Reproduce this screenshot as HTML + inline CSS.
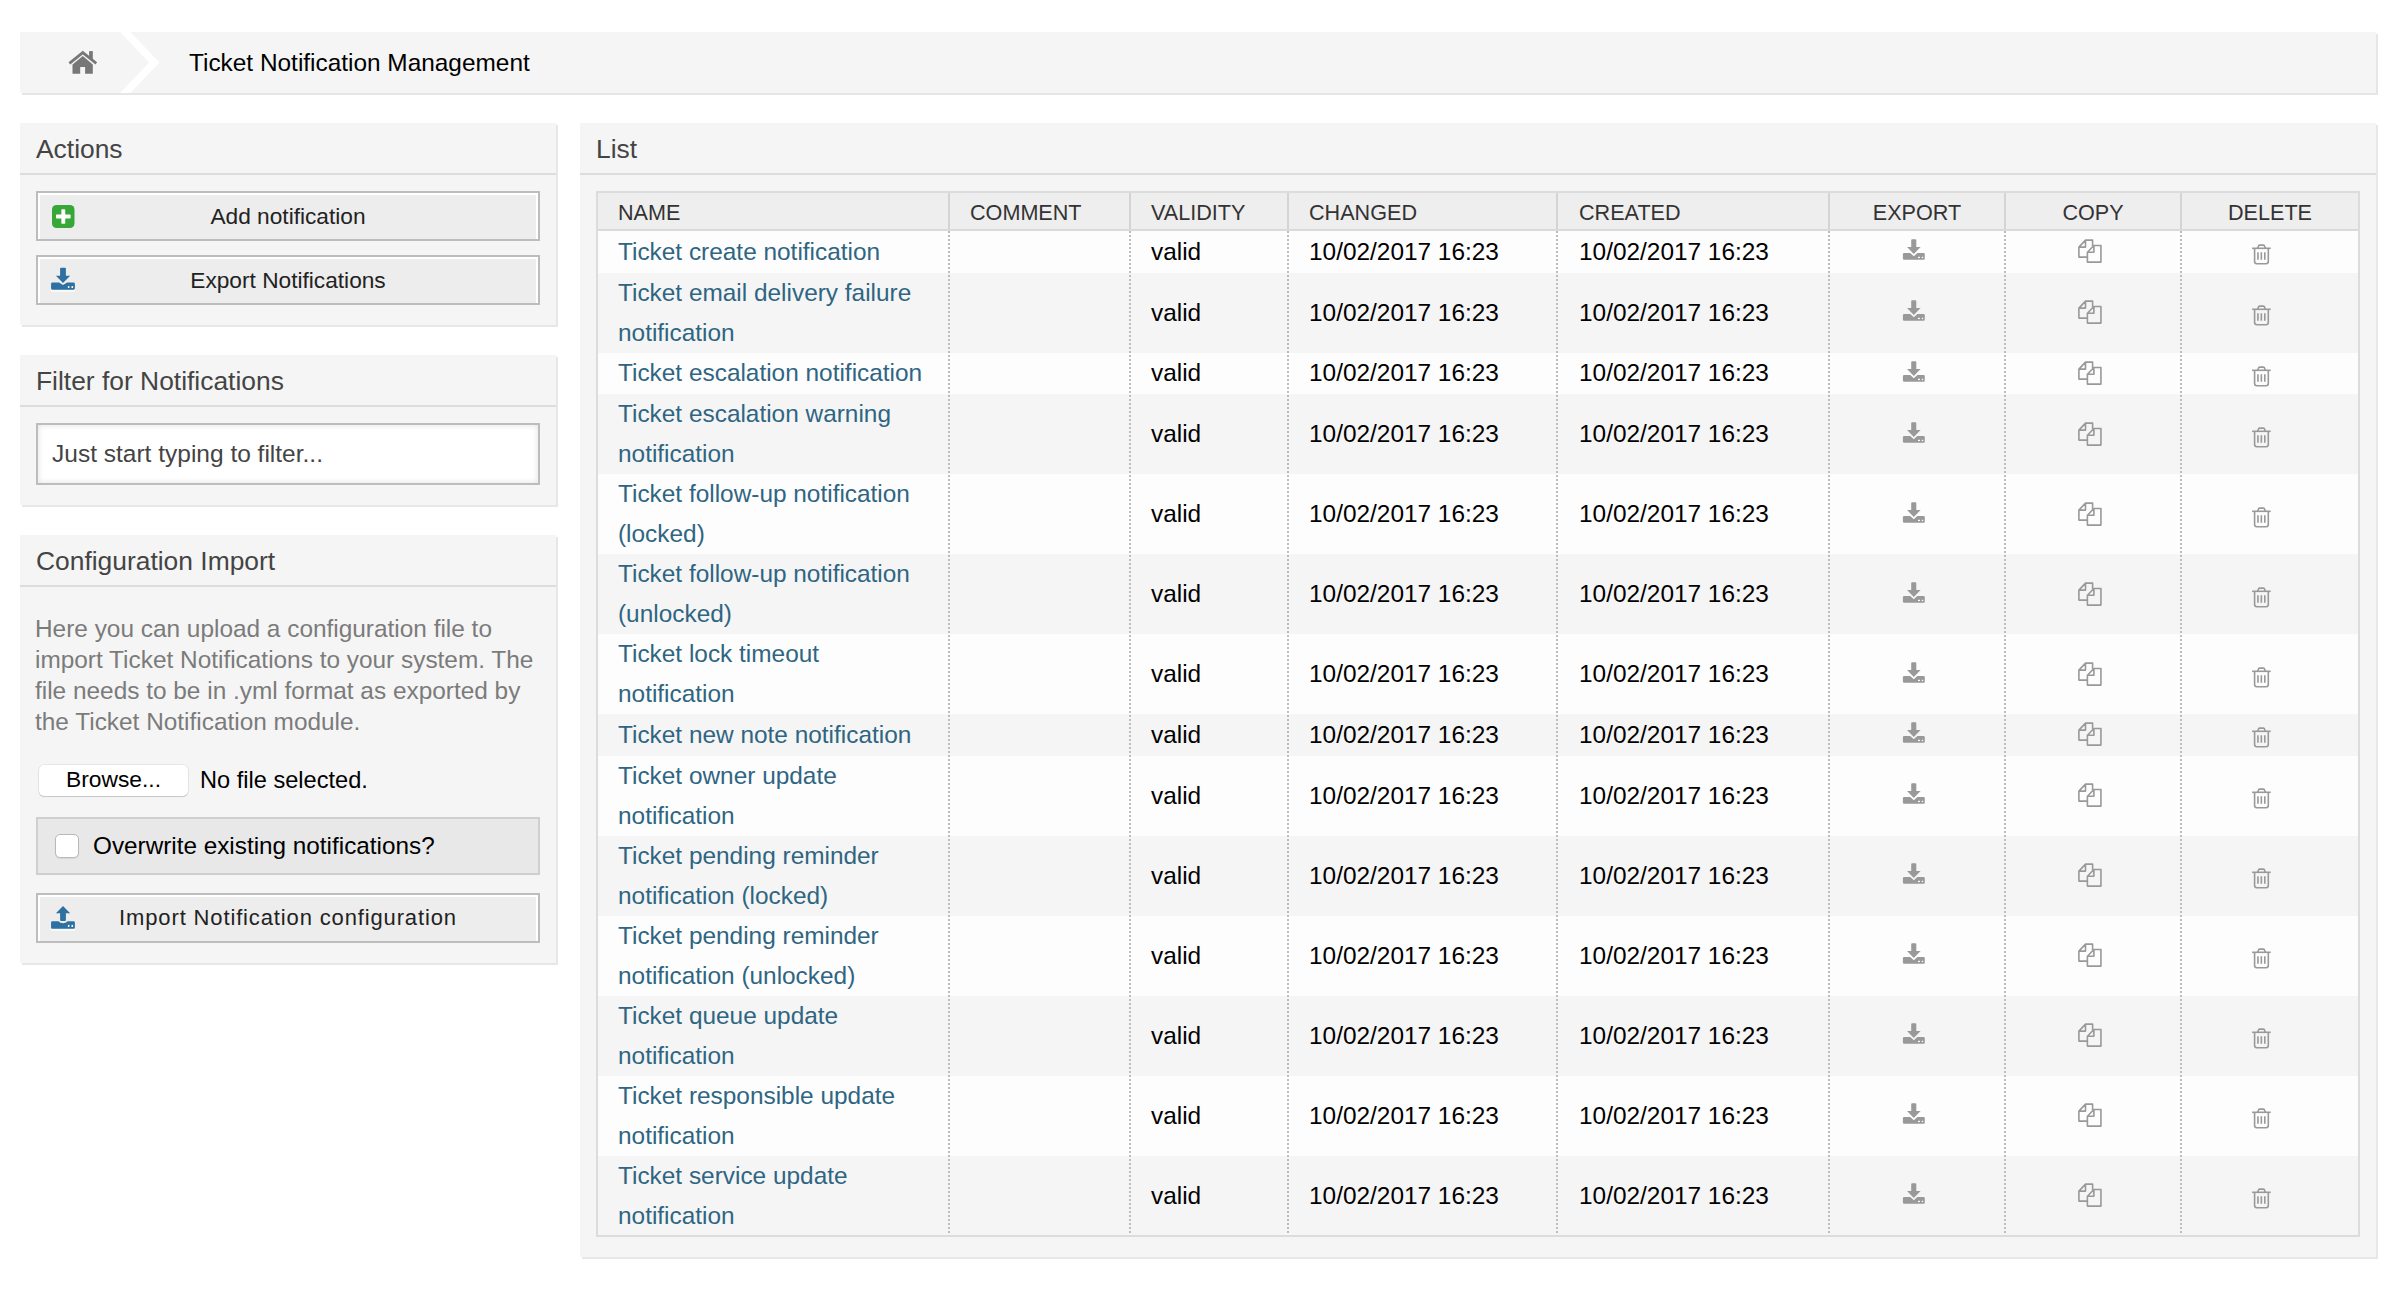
<!DOCTYPE html>
<html><head><meta charset="utf-8">
<style>
*{box-sizing:border-box;margin:0;padding:0}
html,body{width:2400px;height:1300px;overflow:hidden;background:#fff}
body{font-family:"Liberation Sans",sans-serif;color:#000;position:relative}
.abs{position:absolute}
.crumb{left:20px;top:32px;width:2356px;height:61px;background:#f5f5f5;box-shadow:2px 2px 0 #e6e6e6}
.crumb .title{position:absolute;left:169px;top:0;line-height:61px;font-size:24.4px;white-space:nowrap;color:#000}
.panel{background:#f5f5f5;box-shadow:2px 2px 0 #e7e7e7}
.panel .hd{height:52px;border-bottom:2px solid #dcdcdc;position:relative}
.panel .hd h2{position:absolute;left:16px;top:0;font-weight:normal;font-size:26.4px;color:#444;line-height:52px;white-space:nowrap}
.btn{position:absolute;left:16px;width:504px;height:50px;border:2px solid #bdbdbd;background:#ededed;box-shadow:inset 2px 2px 0 #fff,inset -2px 0 0 #fff}
.btn span{position:absolute;left:0;right:0;top:0;text-align:center;line-height:46px;font-size:22.7px;color:#222;white-space:nowrap}
.btn svg{position:absolute}
.desc{position:absolute;left:15px;top:78px;width:510px;font-size:24.4px;line-height:31px;color:#7b7b7b}
/* table */
.tbl{left:596px;top:191px;width:1764px;height:1046px;border:2px solid #dcdcdc;background:#f5f5f5;overflow:hidden}
.th{position:absolute;left:0;top:0;width:1760px;height:38px;background:#eee;border-bottom:2px solid #dadada}
.th div{position:absolute;top:0;height:36px;line-height:40px;font-size:21.6px;color:#333;white-space:nowrap}
.th .sep{width:2px;background:#d4d4d4;height:36px}
.row{position:absolute;left:0;width:1760px}
.odd{background:#fdfdfd}
.even{background:#f5f5f5}
.c{position:absolute;top:0;bottom:0;display:flex;align-items:center;font-size:24.4px;line-height:40px;white-space:nowrap}
.c.n{left:20px;color:#2f6582}
.c.v{left:553px}
.c.d1{left:711px}
.c.d2{left:981px}
.dsep{position:absolute;top:38px;bottom:0;width:2px;background:repeating-linear-gradient(to bottom,#bdbdbd 0,#bdbdbd 2px,transparent 2px,transparent 4px)}
.row svg{position:absolute}
</style></head><body>
<svg width="0" height="0" style="position:absolute">
<defs>
<symbol id="exp" viewBox="0 0 40 36">
 <path d="M16.2 8.3 Q16.2 7.3 17.2 7.3 H20.3 Q21.3 7.3 21.3 8.3 V15.1 H25.6 L18.8 21.9 L12.05 15.1 H16.2 Z" fill="#999"/>
 <path d="M7.9 22.3 Q7.9 21.05 9.2 21.05 H15.2 L18.8 24.3 L22.4 21.05 H28.5 Q29.8 21.05 29.8 22.3 V26.4 Q29.8 27.7 28.5 27.7 H9.2 Q7.9 27.7 7.9 26.4 Z" fill="#999"/>
 <rect x="23" y="24.8" width="1.9" height="1.3" fill="#fff"/><rect x="26.8" y="24.8" width="1.4" height="1.3" fill="#fff"/>
</symbol>
<symbol id="cpy" viewBox="0 0 40 36">
 <g fill="none" stroke="#999" stroke-width="1.6" stroke-linejoin="round">
 <path d="M17.4 20.2 L23.9 13.43 H30.94 V30.1 H17.4 Z M23.9 13.43 V20.2 H17.4"/>
 <path d="M17.4 25.1 H8.9 V15.1 L15.5 8.17 H22.6 V13.9 M15.5 8.17 V15.1 H8.9"/>
 </g>
</symbol>
<symbol id="trs" viewBox="0 0 35 35">
 <g fill="none" stroke="#999" stroke-width="1.6">
 <path d="M7.1 13.3 H25.7"/>
 <path d="M12.6 13.3 L13.8 10.5 Q14.1 10.1 14.7 10.1 H18.3 Q18.9 10.1 19.2 10.5 L20.4 13.3"/>
 <path d="M9.6 13.3 V26.6 Q9.6 28.8 11.8 28.8 H21.1 Q23.3 28.8 23.3 26.6 V13.3"/>
 <path d="M12.95 17.2 V24.8 M16.35 17.2 V24.8 M19.8 17.2 V24.8"/>
 </g>
</symbol>
</defs>
</svg>
<!-- breadcrumb -->
<div class="abs crumb">
  <svg class="abs" style="left:42px;top:10px" width="40" height="40" viewBox="0 0 40 40">
    <polyline points="7.4,21.4 20.8,10.6 34.3,21.4" fill="none" stroke="#777" stroke-width="2.7"/>
    <rect x="27.1" y="9.1" width="3.7" height="8" fill="#777"/>
    <path d="M10.5 22.4 L20.8 13.9 L30.8 22.4 V31.7 H23.1 V25.1 H18.2 V31.7 H10.5 Z" fill="#777"/>
  </svg>
  <svg class="abs" style="left:98px;top:0" width="44" height="61" viewBox="0 0 44 61">
    <polygon points="2,0 12.5,0 41.5,30.5 12.5,61 2,61 31,30.5" fill="#fff"/>
  </svg>
  <div class="title">Ticket Notification Management</div>
</div>

<!-- Actions -->
<div class="abs panel" style="left:20px;top:123px;width:536px;height:202px">
  <div class="hd"><h2>Actions</h2></div>
  <div class="btn" style="top:68px">
    <svg style="left:14px;top:12px" width="24" height="24" viewBox="0 0 24 24"><rect x="0" y="0" width="22.5" height="23" rx="4.5" fill="#37a737"/><rect x="9.35" y="4.3" width="3.9" height="14.4" rx="0.6" fill="#fff"/><rect x="4" y="9.55" width="14.6" height="3.9" rx="0.6" fill="#fff"/></svg>
    <span>Add notification</span>
  </div>
  <div class="btn" style="top:132px">
    <svg style="left:7px;top:5px" width="35" height="35" viewBox="0 0 35 35">
      <path d="M6.05 28.4 H29.9 V29.6 H6.05 Z" fill="#fff"/>
      <path d="M15.1 6.6 Q15.1 5.65 16.1 5.65 H19.9 Q20.9 5.65 20.9 6.6 V13.7 H25.2 L18 20.9 L10.9 13.7 H15.1 Z" fill="#2e70a1"/>
      <path d="M6.05 21.9 Q6.05 20.5 7.4 20.5 H14 L18 22.9 L22.1 20.5 H28.5 Q29.9 20.5 29.9 21.9 V26.3 Q29.9 27.7 28.5 27.7 H7.4 Q6.05 27.7 6.05 26.3 Z" fill="#2e70a1"/>
      <rect x="22.9" y="24.1" width="1.5" height="1.9" fill="#fff"/><rect x="26.5" y="24.1" width="1.6" height="1.9" fill="#fff"/>
    </svg>
    <span>Export Notifications</span>
  </div>
</div>

<!-- Filter -->
<div class="abs panel" style="left:20px;top:355px;width:536px;height:150px">
  <div class="hd"><h2>Filter for Notifications</h2></div>
  <div class="abs" style="left:16px;top:68px;width:504px;height:62px;border:2px solid #bdbdbd;background:#fff;box-shadow:inset 0 0 6px rgba(0,0,0,.12)">
    <div style="position:absolute;left:14px;top:0;line-height:58px;font-size:24.5px;color:#444;white-space:nowrap">Just start typing to filter...</div>
  </div>
</div>

<!-- Config import -->
<div class="abs panel" style="left:20px;top:535px;width:536px;height:428px">
  <div class="hd"><h2>Configuration Import</h2></div>
  <div class="desc">Here you can upload a configuration file to import Ticket Notifications to your system. The file needs to be in .yml format as exported by the Ticket Notification module.</div>
  <div class="abs" style="left:19px;top:230px;width:149px;height:31px;background:#fff;border-radius:5px;box-shadow:0 0 0 0.5px rgba(0,0,0,.12),0 1px 1px rgba(0,0,0,.14)">
    <div style="position:absolute;left:0;right:0;top:-1px;text-align:center;line-height:31px;font-size:22.8px;color:#000">Browse...</div>
  </div>
  <div class="abs" style="left:180px;top:230px;line-height:31px;font-size:23.6px;color:#000;white-space:nowrap">No file selected.</div>
  <div class="abs" style="left:16px;top:282px;width:504px;height:58px;border:2px solid #cfcfcf;background:#e8e8e8">
    <div class="abs" style="left:17px;top:15px;width:24px;height:24px;background:#fff;border:1px solid #b9b9b9;border-radius:5px;box-shadow:0 1px 1px rgba(0,0,0,.08)"></div>
    <div class="abs" style="left:55px;top:0;line-height:54px;font-size:24.3px;color:#000;white-space:nowrap">Overwrite existing notifications?</div>
  </div>
  <div class="btn" style="top:358px">
    <svg style="left:7px;top:5px" width="35" height="35" viewBox="0 0 35 35">
      <path d="M6.05 29.4 H29.9 V30.6 H6.05 Z" fill="#fff"/>
      <path d="M18 5.9 L25.2 13.2 H20.9 V20.1 Q20.9 21 19.9 21 H16.1 Q15.1 21 15.1 20.1 V13.2 H10.9 Z" fill="#2e70a1"/>
      <path d="M6.05 22.7 Q6.05 21.3 7.4 21.3 H13.5 Q15.2 23.2 18 23.2 Q20.8 23.2 22.6 21.3 H28.5 Q29.9 21.3 29.9 22.7 V27.4 Q29.9 28.8 28.5 28.8 H7.4 Q6.05 28.8 6.05 27.4 Z" fill="#2e70a1"/>
      <rect x="22.9" y="24.9" width="1.5" height="2" fill="#fff"/><rect x="26.5" y="24.9" width="1.6" height="2" fill="#fff"/>
    </svg>
    <span style="font-size:22px;letter-spacing:0.86px">Import Notification configuration</span>
  </div>
</div>
<div class="abs panel" style="left:580px;top:123px;width:1796px;height:1134px"><div class="hd"><h2>List</h2></div></div>
<div class="abs tbl"><div class="th">
<div class="sep" style="left:350px"></div>
<div class="sep" style="left:531px"></div>
<div class="sep" style="left:689px"></div>
<div class="sep" style="left:958px"></div>
<div class="sep" style="left:1230px"></div>
<div class="sep" style="left:1406px"></div>
<div class="sep" style="left:1582px"></div>
<div style="left:20px">NAME</div><div style="left:372px">COMMENT</div><div style="left:553px">VALIDITY</div><div style="left:711px">CHANGED</div><div style="left:981px">CREATED</div>
<div style="left:1232px;width:174px;text-align:center">EXPORT</div><div style="left:1408px;width:174px;text-align:center">COPY</div><div style="left:1584px;width:176px;text-align:center">DELETE</div>
</div>
<div class="row odd" style="top:38.0px;height:41.5px"><div class="c n"><span>Ticket create notification</span></div><div class="c v">valid</div><div class="c d1">10/02/2017 16:23</div><div class="c d2">10/02/2017 16:23</div><svg style="left:1297px;top:1.25px" width="40" height="36"><use href="#exp"/></svg><svg style="left:1472px;top:1.25px" width="40" height="36"><use href="#cpy"/></svg><svg style="left:1647px;top:4.25px" width="35" height="35"><use href="#trs"/></svg></div>
<div class="row even" style="top:79.5px;height:80px"><div class="c n"><span>Ticket email delivery failure<br>notification</span></div><div class="c v">valid</div><div class="c d1">10/02/2017 16:23</div><div class="c d2">10/02/2017 16:23</div><svg style="left:1297px;top:20.50px" width="40" height="36"><use href="#exp"/></svg><svg style="left:1472px;top:20.50px" width="40" height="36"><use href="#cpy"/></svg><svg style="left:1647px;top:23.50px" width="35" height="35"><use href="#trs"/></svg></div>
<div class="row odd" style="top:159.5px;height:41.5px"><div class="c n"><span>Ticket escalation notification</span></div><div class="c v">valid</div><div class="c d1">10/02/2017 16:23</div><div class="c d2">10/02/2017 16:23</div><svg style="left:1297px;top:1.25px" width="40" height="36"><use href="#exp"/></svg><svg style="left:1472px;top:1.25px" width="40" height="36"><use href="#cpy"/></svg><svg style="left:1647px;top:4.25px" width="35" height="35"><use href="#trs"/></svg></div>
<div class="row even" style="top:201.0px;height:80px"><div class="c n"><span>Ticket escalation warning<br>notification</span></div><div class="c v">valid</div><div class="c d1">10/02/2017 16:23</div><div class="c d2">10/02/2017 16:23</div><svg style="left:1297px;top:20.50px" width="40" height="36"><use href="#exp"/></svg><svg style="left:1472px;top:20.50px" width="40" height="36"><use href="#cpy"/></svg><svg style="left:1647px;top:23.50px" width="35" height="35"><use href="#trs"/></svg></div>
<div class="row odd" style="top:281.0px;height:80px"><div class="c n"><span>Ticket follow-up notification<br>(locked)</span></div><div class="c v">valid</div><div class="c d1">10/02/2017 16:23</div><div class="c d2">10/02/2017 16:23</div><svg style="left:1297px;top:20.50px" width="40" height="36"><use href="#exp"/></svg><svg style="left:1472px;top:20.50px" width="40" height="36"><use href="#cpy"/></svg><svg style="left:1647px;top:23.50px" width="35" height="35"><use href="#trs"/></svg></div>
<div class="row even" style="top:361.0px;height:80px"><div class="c n"><span>Ticket follow-up notification<br>(unlocked)</span></div><div class="c v">valid</div><div class="c d1">10/02/2017 16:23</div><div class="c d2">10/02/2017 16:23</div><svg style="left:1297px;top:20.50px" width="40" height="36"><use href="#exp"/></svg><svg style="left:1472px;top:20.50px" width="40" height="36"><use href="#cpy"/></svg><svg style="left:1647px;top:23.50px" width="35" height="35"><use href="#trs"/></svg></div>
<div class="row odd" style="top:441.0px;height:80px"><div class="c n"><span>Ticket lock timeout<br>notification</span></div><div class="c v">valid</div><div class="c d1">10/02/2017 16:23</div><div class="c d2">10/02/2017 16:23</div><svg style="left:1297px;top:20.50px" width="40" height="36"><use href="#exp"/></svg><svg style="left:1472px;top:20.50px" width="40" height="36"><use href="#cpy"/></svg><svg style="left:1647px;top:23.50px" width="35" height="35"><use href="#trs"/></svg></div>
<div class="row even" style="top:521.0px;height:41.5px"><div class="c n"><span>Ticket new note notification</span></div><div class="c v">valid</div><div class="c d1">10/02/2017 16:23</div><div class="c d2">10/02/2017 16:23</div><svg style="left:1297px;top:1.25px" width="40" height="36"><use href="#exp"/></svg><svg style="left:1472px;top:1.25px" width="40" height="36"><use href="#cpy"/></svg><svg style="left:1647px;top:4.25px" width="35" height="35"><use href="#trs"/></svg></div>
<div class="row odd" style="top:562.5px;height:80px"><div class="c n"><span>Ticket owner update<br>notification</span></div><div class="c v">valid</div><div class="c d1">10/02/2017 16:23</div><div class="c d2">10/02/2017 16:23</div><svg style="left:1297px;top:20.50px" width="40" height="36"><use href="#exp"/></svg><svg style="left:1472px;top:20.50px" width="40" height="36"><use href="#cpy"/></svg><svg style="left:1647px;top:23.50px" width="35" height="35"><use href="#trs"/></svg></div>
<div class="row even" style="top:642.5px;height:80px"><div class="c n"><span>Ticket pending reminder<br>notification (locked)</span></div><div class="c v">valid</div><div class="c d1">10/02/2017 16:23</div><div class="c d2">10/02/2017 16:23</div><svg style="left:1297px;top:20.50px" width="40" height="36"><use href="#exp"/></svg><svg style="left:1472px;top:20.50px" width="40" height="36"><use href="#cpy"/></svg><svg style="left:1647px;top:23.50px" width="35" height="35"><use href="#trs"/></svg></div>
<div class="row odd" style="top:722.5px;height:80px"><div class="c n"><span>Ticket pending reminder<br>notification (unlocked)</span></div><div class="c v">valid</div><div class="c d1">10/02/2017 16:23</div><div class="c d2">10/02/2017 16:23</div><svg style="left:1297px;top:20.50px" width="40" height="36"><use href="#exp"/></svg><svg style="left:1472px;top:20.50px" width="40" height="36"><use href="#cpy"/></svg><svg style="left:1647px;top:23.50px" width="35" height="35"><use href="#trs"/></svg></div>
<div class="row even" style="top:802.5px;height:80px"><div class="c n"><span>Ticket queue update<br>notification</span></div><div class="c v">valid</div><div class="c d1">10/02/2017 16:23</div><div class="c d2">10/02/2017 16:23</div><svg style="left:1297px;top:20.50px" width="40" height="36"><use href="#exp"/></svg><svg style="left:1472px;top:20.50px" width="40" height="36"><use href="#cpy"/></svg><svg style="left:1647px;top:23.50px" width="35" height="35"><use href="#trs"/></svg></div>
<div class="row odd" style="top:882.5px;height:80px"><div class="c n"><span>Ticket responsible update<br>notification</span></div><div class="c v">valid</div><div class="c d1">10/02/2017 16:23</div><div class="c d2">10/02/2017 16:23</div><svg style="left:1297px;top:20.50px" width="40" height="36"><use href="#exp"/></svg><svg style="left:1472px;top:20.50px" width="40" height="36"><use href="#cpy"/></svg><svg style="left:1647px;top:23.50px" width="35" height="35"><use href="#trs"/></svg></div>
<div class="row even" style="top:962.5px;height:80px"><div class="c n"><span>Ticket service update<br>notification</span></div><div class="c v">valid</div><div class="c d1">10/02/2017 16:23</div><div class="c d2">10/02/2017 16:23</div><svg style="left:1297px;top:20.50px" width="40" height="36"><use href="#exp"/></svg><svg style="left:1472px;top:20.50px" width="40" height="36"><use href="#cpy"/></svg><svg style="left:1647px;top:23.50px" width="35" height="35"><use href="#trs"/></svg></div>
<div class="dsep" style="left:350px"></div>
<div class="dsep" style="left:531px"></div>
<div class="dsep" style="left:689px"></div>
<div class="dsep" style="left:958px"></div>
<div class="dsep" style="left:1230px"></div>
<div class="dsep" style="left:1406px"></div>
<div class="dsep" style="left:1582px"></div>
</div>
</body></html>
